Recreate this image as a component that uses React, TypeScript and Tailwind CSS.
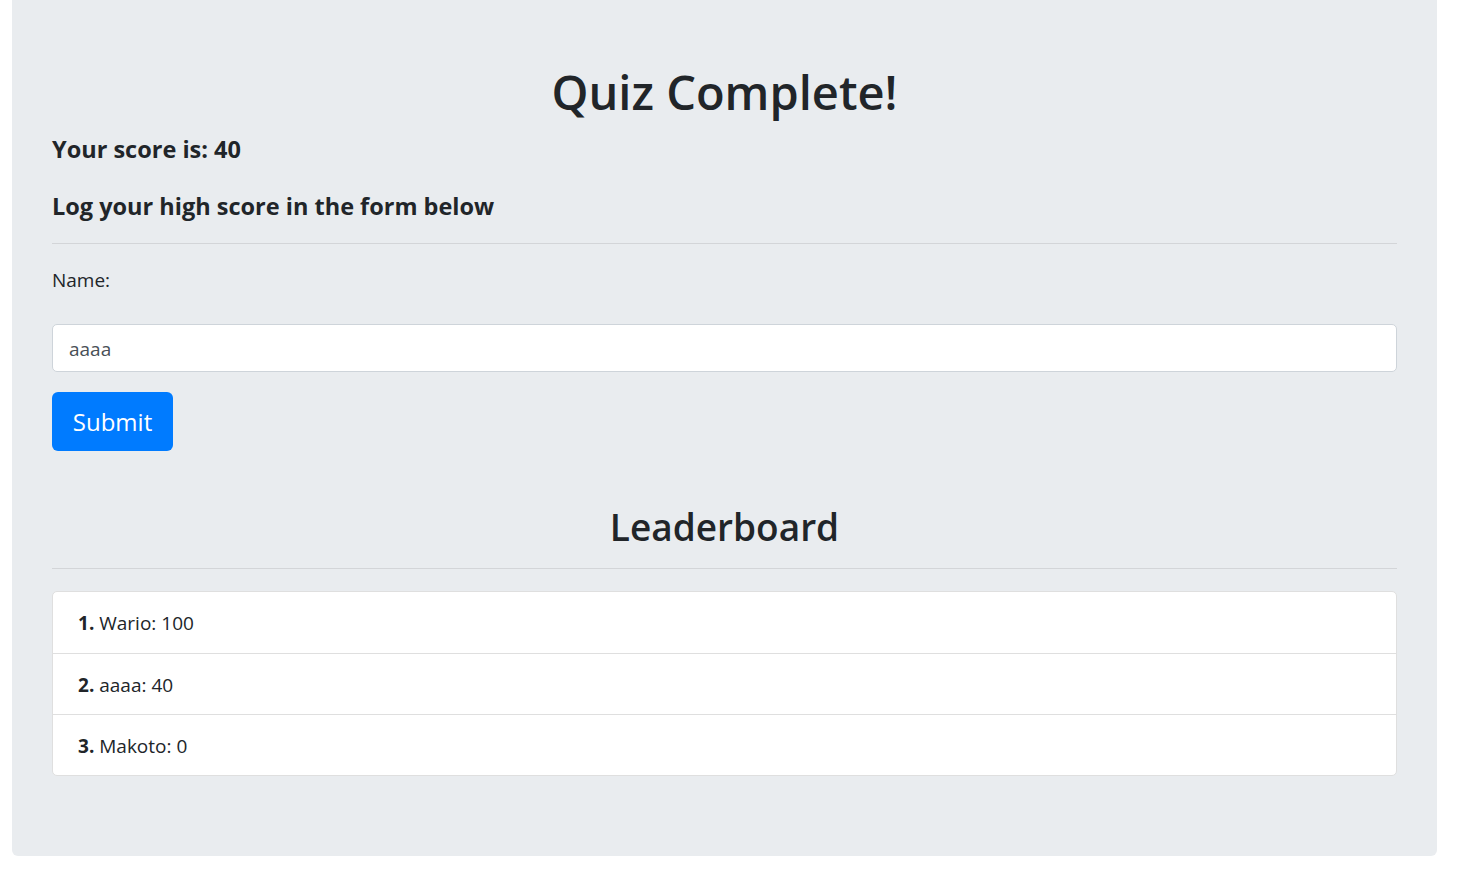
export default function App() {
  const scores = [
    { name: "Wario", score: 100 },
    { name: "aaaa", score: 40 },
    { name: "Makoto", score: 0 },
  ];

  return (
    <div className="h-[870px] w-full overflow-hidden bg-white text-[#212529] font-['Open_Sans',sans-serif]">
      <div className="ml-[12px] w-[1425px] rounded-b-[6px] bg-[#e9ecef] px-[40px] pt-[62px] pb-[80px]">
        <h1 className="h-[60px] text-center text-[47px] leading-[60px] font-semibold">Quiz Complete!</h1>
        <h5 className="mt-[12px] h-[30px] text-[23.5px] leading-[30px] font-bold">Your score is: 40</h5>
        <h5 className="mt-[27px] h-[30px] text-[23.5px] leading-[30px] font-bold">Log your high score in the form below</h5>
        <hr className="mt-[22px] border-t border-[#d3d5d8]" />

        <label className="mt-[21px] block h-[30px] text-[19px] leading-[30px]">Name:</label>
        <input
          className="mt-[29px] block h-[48px] w-full rounded-[5px] border border-[#ced4da] bg-white px-[16px] pt-[2px] text-[19px] text-[#495057] outline-none"
          defaultValue="aaaa"
        />
        <button className="mt-[20px] h-[59px] w-[121px] rounded-[6px] bg-[#007bff] text-[24px] text-white">Submit</button>

        <h2 className="mt-[52px] h-[48px] text-center text-[37px] leading-[48px] font-semibold">Leaderboard</h2>
        <hr className="mt-[17px] border-t border-[#d3d5d8]" />

        <ul className="mt-[22px] rounded-[5px] border border-[#dfdfdf] bg-white">
          {scores.map((s, i) => (
            <li
              key={s.name}
              className={`h-[61px] px-[25px] pt-[3px] text-[19px] leading-[57px] ${i > 0 ? "border-t border-[#dfdfdf]" : ""}`}
            >
              <span className="font-bold">{i + 1}.</span> {s.name}: {s.score}
            </li>
          ))}
        </ul>
      </div>
    </div>
  );
}
